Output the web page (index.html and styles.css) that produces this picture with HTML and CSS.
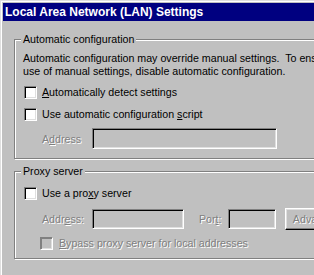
FILE: index.html
```html
<!DOCTYPE html>
<html>
<head>
<meta charset="utf-8">
<link rel="stylesheet" href="styles.css">
</head>
<body>
<div class="window">
  <div class="frame">
    <div class="titlebar">Local Area Network (LAN) Settings</div>
    <div class="content">
      <fieldset class="group group-auto">
        <legend>Automatic configuration</legend>
        <p class="desc">Automatic configuration may override manual settings.&nbsp; To ensure the<br>use of manual settings, disable automatic configuration.</p>
        <div class="row check-row first"><span class="checkbox"></span><span class="check-label"><u>A</u>utomatically detect settings</span></div>
        <div class="row check-row"><span class="checkbox"></span><span class="check-label">Use automatic configuration <u>s</u>cript</span></div>
        <div class="row field-row"><span class="field-label disabled">A<u>d</u>dress</span><span class="textbox addr-wide"></span></div>
      </fieldset>
      <fieldset class="group group-proxy">
        <legend>Proxy server</legend>
        <div class="row check-row first"><span class="checkbox"></span><span class="check-label">Use a pro<u>x</u>y server</span></div>
        <div class="row proxy-row"><span class="field-label disabled">Addr<u>e</u>ss:</span><span class="textbox addr-proxy"></span><span class="port-label disabled">Por<u>t</u>:</span><span class="textbox port"></span><span class="button disabled">Adva<u>n</u>ced...</span></div>
        <div class="row bypass-row"><span class="checkbox off"></span><span class="check-label disabled"><u>B</u>ypass proxy server for local addresses</span></div>
      </fieldset>
    </div>
  </div>
</div>
</body>
</html>
```
FILE: styles.css
```css
html, body {
  margin: 0;
  width: 314px;
  height: 275px;
  overflow: hidden;
  background: #c0c0c0;
}
body {
  font-family: "Liberation Sans", Arial, sans-serif;
  font-size: 10.67px;
  color: #000;
}
.window {
  width: 480px;
  height: 400px;
  border-top: 1px solid #dfdfdf;
  border-left: 1px solid #dfdfdf;
}
.frame {
  height: 100%;
  border-top: 1px solid #fff;
  border-left: 1px solid #fff;
  padding: 1px 0 0 1px;
}
.titlebar {
  height: 18px;
  line-height: 18px;
  background: #000080;
  color: #fff;
  font-weight: bold;
  font-size: 12px;
  padding-left: 2px;
  white-space: nowrap;
}
.content {
  padding-left: 11px;
}
.group {
  width: 400px;
  min-width: 0;
  margin: 12px 0 0 0;
  border: 1px solid #808080;
  box-shadow: inset 1px 1px 0 #fff, 1px 1px 0 #fff;
  padding: 6px 0 9px 8px;
}
.group-proxy {
  margin-top: 6px;
  padding-top: 4px;
  padding-bottom: 4px;
}
legend {
  padding: 0 2px;
  margin-left: -2px;
  line-height: 13px;
  background: #c0c0c0;
}
.desc {
  margin: 0;
  line-height: 13px;
  white-space: nowrap;
}
.row {
  display: flex;
  align-items: center;
  height: 22px;
  white-space: nowrap;
}
.group-auto .check-row.first {
  margin-top: 3px;
}
.checkbox {
  box-sizing: border-box;
  width: 13px;
  height: 13px;
  flex: none;
  margin-left: 1px;
  background: #fff;
  border: 1px solid;
  border-color: #808080 #fff #fff #808080;
  box-shadow: inset 1px 1px 0 #000, inset -1px -1px 0 #dfdfdf;
}
.checkbox.off {
  background: #c0c0c0;
  box-shadow: inset 1px 1px 0 #808080, inset -1px -1px 0 #dfdfdf;
}
.check-label {
  margin-left: 5px;
}
.disabled {
  color: #808080;
  text-shadow: 1px 1px 0 #fff;
}
.field-row {
  height: 21px;
  margin-top: 3px;
}
.field-label {
  box-sizing: border-box;
  width: 69px;
  padding-left: 19px;
  flex: none;
}
.textbox {
  box-sizing: border-box;
  flex: none;
  height: 100%;
  background: #c0c0c0;
  border: 1px solid;
  border-color: #808080 #fff #fff #808080;
  box-shadow: inset 1px 1px 0 #000, inset -1px -1px 0 #dfdfdf;
}
.addr-wide {
  width: 185px;
}
.proxy-row {
  margin-top: 4px;
}
.proxy-row .textbox {
  height: 20px;
}
.addr-proxy {
  width: 92px;
}
.port-label {
  margin-left: 15px;
  width: 29px;
  flex: none;
}
.port {
  width: 48px;
}
.button {
  box-sizing: border-box;
  flex: none;
  width: 72px;
  height: 22px;
  margin-left: 9px;
  display: flex;
  align-items: center;
  justify-content: center;
  border: 1px solid;
  border-color: #fff #000 #000 #fff;
  box-shadow: inset -1px -1px 0 #808080, inset 1px 1px 0 #dfdfdf;
}
.bypass-row {
  margin-top: 2px;
}
.bypass-row .checkbox {
  margin-left: 17px;
}
.bypass-row .check-label {
  margin-left: 6px;
}
```
